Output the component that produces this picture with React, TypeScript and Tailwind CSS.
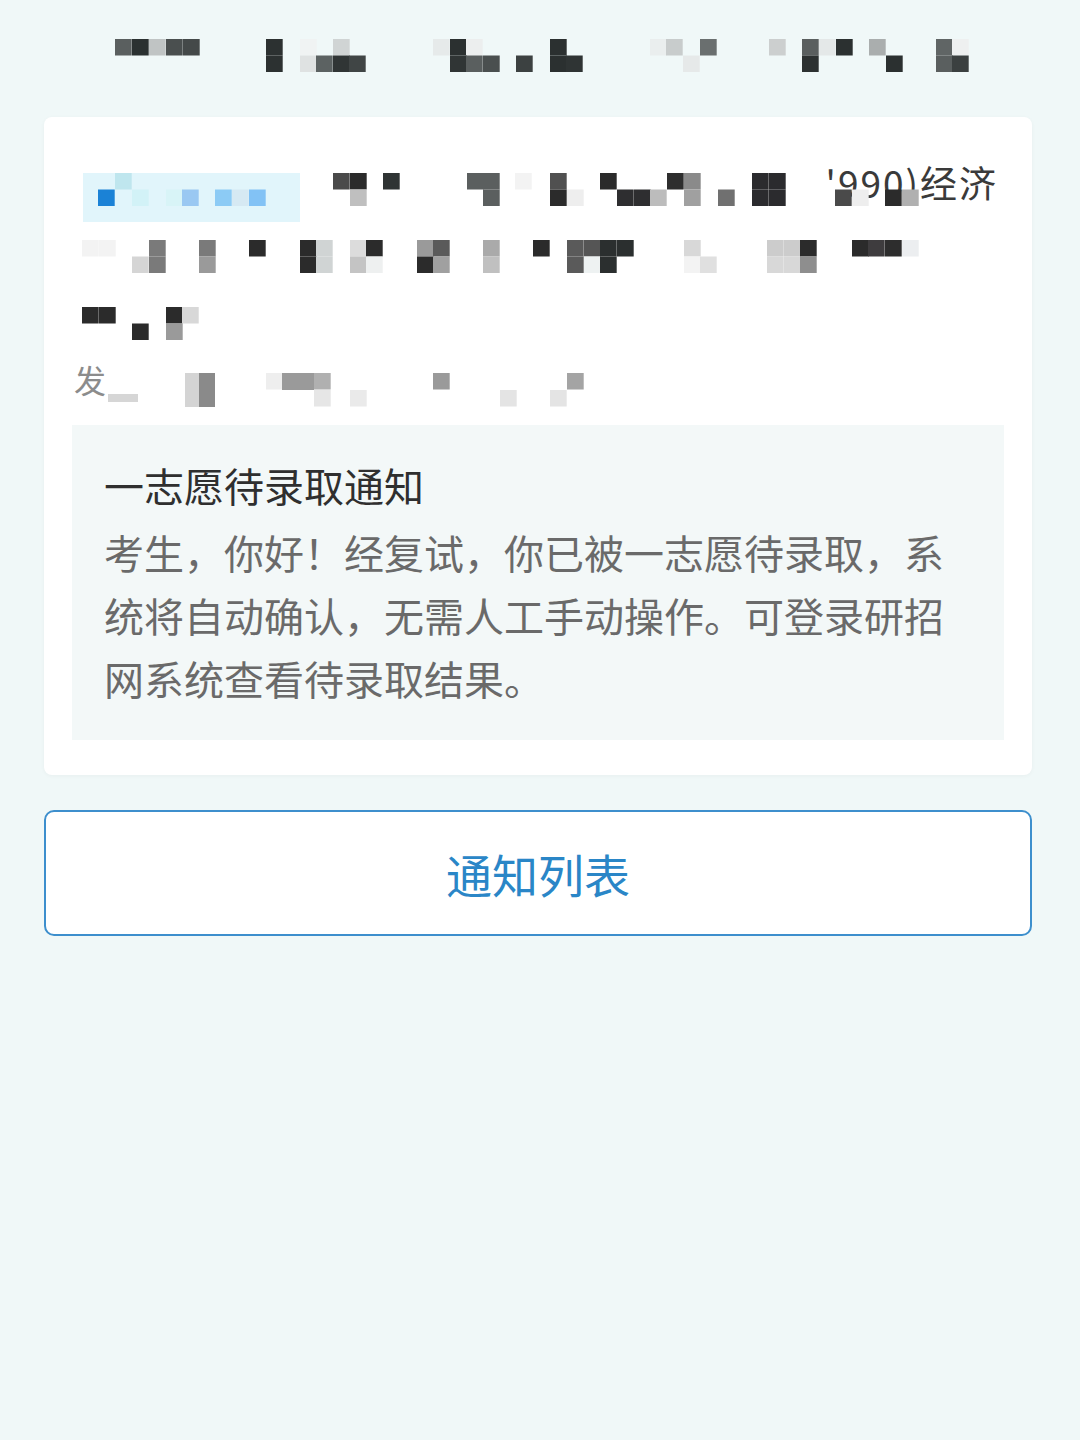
type Cell = [number, number, string, number?, number?];

const S = 16.7;

// header (page y 39-72)
const h1 = 39;
const h2 = 55.5;
const headerCells: Cell[] = [
  [115, h1, "#5a5f5f"], [132, h1, "#2b3131"], [149, h1, "#c0c4c4"], [166, h1, "#4a4f4f"], [183, h1, "#444949"],
  [266, h1, "#2c3131"], [266, h2, "#2c3131"],
  [300, h1, "#f0f3f3"], [333, h1, "#d0d4d4"], [300, h2, "#dfe2e2"], [316, h2, "#5c6262"], [333, h2, "#303535"], [349, h2, "#404545"],
  [433, h1, "#e6eaea"], [450, h1, "#2b3030"], [466, h1, "#eceeee"], [450, h2, "#303535"], [466, h2, "#5a5f5f"], [483, h2, "#4a4f4f"], [516, h2, "#3c4141"],
  [550, h1, "#2b3030"], [550, h2, "#2b3030"], [566, h2, "#2f3434"],
  [650, h1, "#eaeeee"], [666, h1, "#c8cccc"], [683, h2, "#e6e9e9"],
  [700, h1, "#6a6f6f"], [769, h1, "#cccfcf"], [802, h1, "#5a5f5f"], [819, h1, "#e4e8e8"], [836, h1, "#2b3030"], [869, h1, "#aaaeae"],
  [936, h1, "#606565"], [952, h1, "#eef0f0"],
  [802, h2, "#2c3131"], [886, h2, "#2b3030"], [936, h2, "#5a5f5f"], [952, h2, "#3b4040"],
];

const a1 = 173;
const a2 = 189.5;
const row1Cells: Cell[] = [
  [83, a1, "#e1f5fb", 217, 49],
  [115, a1, "#bfe6ee"], [98, a2, "#1b82d6"], [132, a2, "#d2f2f7"], [166, a2, "#d8f4f7"], [182, a2, "#9ac8f2"],
  [215, a2, "#8ccbf5"], [232, a2, "#d6e9f3"], [249, a2, "#82c2f5"],
  [333, a1, "#4a4a4a"], [350, a1, "#2b2b2b"], [350, a2, "#bfbfbf"], [383, a1, "#2f3434"],
  [467, a1, "#5b5f5f"], [483, a1, "#5b5f5f"], [483, a2, "#5b5f5f"], [515, a1, "#f3f3f3"],
  [550, a1, "#505050"], [550, a2, "#2b2b2b"], [567, a2, "#eeeeee"],
  [600, a1, "#2b2b2b"], [617, a2, "#2e2e30"], [634, a2, "#2e2e30"], [650, a2, "#bcbcbc"],
  [667, a1, "#2e2e2e"], [684, a1, "#8a8a8a"], [684, a2, "#a0a0a0"], [718, a2, "#707070"],
  [752, a1, "#2b2b2e"], [769, a1, "#2b2b2e"], [752, a2, "#2b2b2e"], [769, a2, "#2b2b2e"],
  [835, a2, "#4a4a4a"], [852, a2, "#eeeeee"], [885, a2, "#2b2b2b"], [902, a2, "#b0b0b0"],
];

const b1 = 240;
const b2 = 256.5;
const row2Cells: Cell[] = [
  [82, b1, "#f3f3f3"], [99, b1, "#f3f3f3"], [132, b2, "#d5d5d5"], [149, b1, "#7a7a7a"], [149, b2, "#7a7a7a"],
  [199, b1, "#7a7a7a"], [199, b2, "#9a9a9a"], [249, b1, "#2b2b2b"],
  [300, b1, "#2b2b2b"], [300, b2, "#2b2b2b"], [316, b1, "#d0d4d4"], [316, b2, "#d0d4d4"],
  [350, b1, "#dcdcdc"], [350, b2, "#c4c4c4"], [366, b1, "#2b2b2b"], [366, b2, "#eef0f0"],
  [417, b1, "#9a9a9a"], [417, b2, "#2b2b2b"], [433, b1, "#5a5a5a"], [433, b2, "#a0a0a0"],
  [483, b1, "#aaaaaa"], [483, b2, "#c0c0c0"], [533, b1, "#2b2b2b"],
  [567, b1, "#5a5a5a"], [567, b2, "#5a5a5a"], [584, b1, "#555555"], [584, b2, "#eef2f2"],
  [600, b1, "#2b2f2f"], [600, b2, "#2b2f2f"], [617, b1, "#2b2f2f"],
  [684, b1, "#d8d8d8"], [684, b2, "#f3f3f3"], [700, b2, "#e0e0e0"],
  [767, b1, "#cccccc"], [784, b1, "#cccccc"], [767, b2, "#d8d8d8"], [784, b2, "#d8d8d8"],
  [800, b1, "#2b2b2b"], [800, b2, "#8e8e8e"],
  [852, b1, "#2b2b2b"], [868, b1, "#3e3c3e"], [885, b1, "#2d2d2d"], [902, b1, "#eceef0"],
];

const c1 = 307;
const c2 = 323.5;
const row3Cells: Cell[] = [
  [82, c1, "#2b2b2b"], [99, c1, "#2b2b2b"], [132, c2, "#2b2b2b"],
  [166, c1, "#2b2b2b"], [166, c2, "#9a9a9a"], [182, c1, "#d8d8d8"],
];

const d1 = 373;
const d2 = 390;
const row4Cells: Cell[] = [
  [108, d2 + 4, "#d6d6d6", 30, 8],
  [185, d1, "#d4d4d4", 14, 34], [199, d1, "#8a8a8a", 16, 34],
  [266, d1, "#eeeeee"], [282, d1, "#9a9a9a", 32, 17], [314, d1, "#b0b0b0"],
  [314, d2, "#e6e6e6"], [350, d2, "#eaeaea"], [433, d1, "#9a9a9a"],
  [500, d2, "#e4e4e4"], [550, d2, "#e4e4e4"], [567, d1, "#a4a4a4"],
];

function Mosaic({ x, y, w, h, cells, className = "" }: { x: number; y: number; w: number; h: number; cells: Cell[]; className?: string }) {
  return (
    <svg width={w} height={h} viewBox={`${x} ${y} ${w} ${h}`} className={className}>
      {cells.map(([cx, cy, fill, cw, ch], i) => (
        <rect key={i} x={cx} y={cy} width={cw ?? S} height={ch ?? S - 0.2} fill={fill} />
      ))}
    </svg>
  );
}

export default function App() {
  return (
    <div className="min-h-[1440px] w-[1080px] bg-[#f0f8f8] font-['Noto_Sans_CJK_SC','Noto_Sans',sans-serif]">
      {/* page title (mosaiced) */}
      <div className="pt-[39px] pl-[115px]">
        <Mosaic x={115} y={39} w={860} h={33} cells={headerCells} className="block" />
      </div>

      {/* notice card */}
      <div className="ml-[44px] mr-[48px] mt-[45px] rounded-[8px] bg-white px-[28px] pt-[38px] pb-[35px] shadow-[0_1px_4px_rgba(0,0,0,0.04)]">
        <div className="px-[6px]">
          <div className="relative flex h-[70px] justify-end pt-[7px]">
            <span className="text-[37px] leading-[40px] tracking-[2px] text-[#3a3a3a]">'990)经济</span>
            <Mosaic x={78} y={155} w={920} h={70} cells={row1Cells} className="absolute inset-0" />
          </div>
          <Mosaic x={78} y={225} w={920} h={65} cells={row2Cells} className="block" />
          <Mosaic x={78} y={290} w={920} h={60} cells={row3Cells} className="block" />
          <div className="relative h-[65px] pt-[9px]">
            <span className="-ml-[4px] text-[32px] leading-[40px] text-[#8c8c8c]">发</span>
            <Mosaic x={78} y={350} w={920} h={65} cells={row4Cells} className="absolute inset-0" />
          </div>
        </div>

        <div className="mt-[10px] bg-[#f3f8f8] px-[32px] pt-[36px] pb-[30px]">
          <h3 className="text-[40px] leading-[48px] text-[#2f2f2f]">一志愿待录取通知</h3>
          <p className="mt-[12px] text-[40px] leading-[63px] text-[#6a6a6a]">
            考生，你好！经复试，你已被一志愿待录取，系统将自动确认，无需人工手动操作。可登录研招网系统查看待录取结果。
          </p>
        </div>
      </div>

      <div className="ml-[44px] mr-[48px] mt-[35px]">
        <button className="flex h-[126px] w-full items-center justify-center rounded-[10px] border-2 border-[#3d8fcd] bg-white text-[46px] text-[#2a86c7]">
          通知列表
        </button>
      </div>
    </div>
  );
}
